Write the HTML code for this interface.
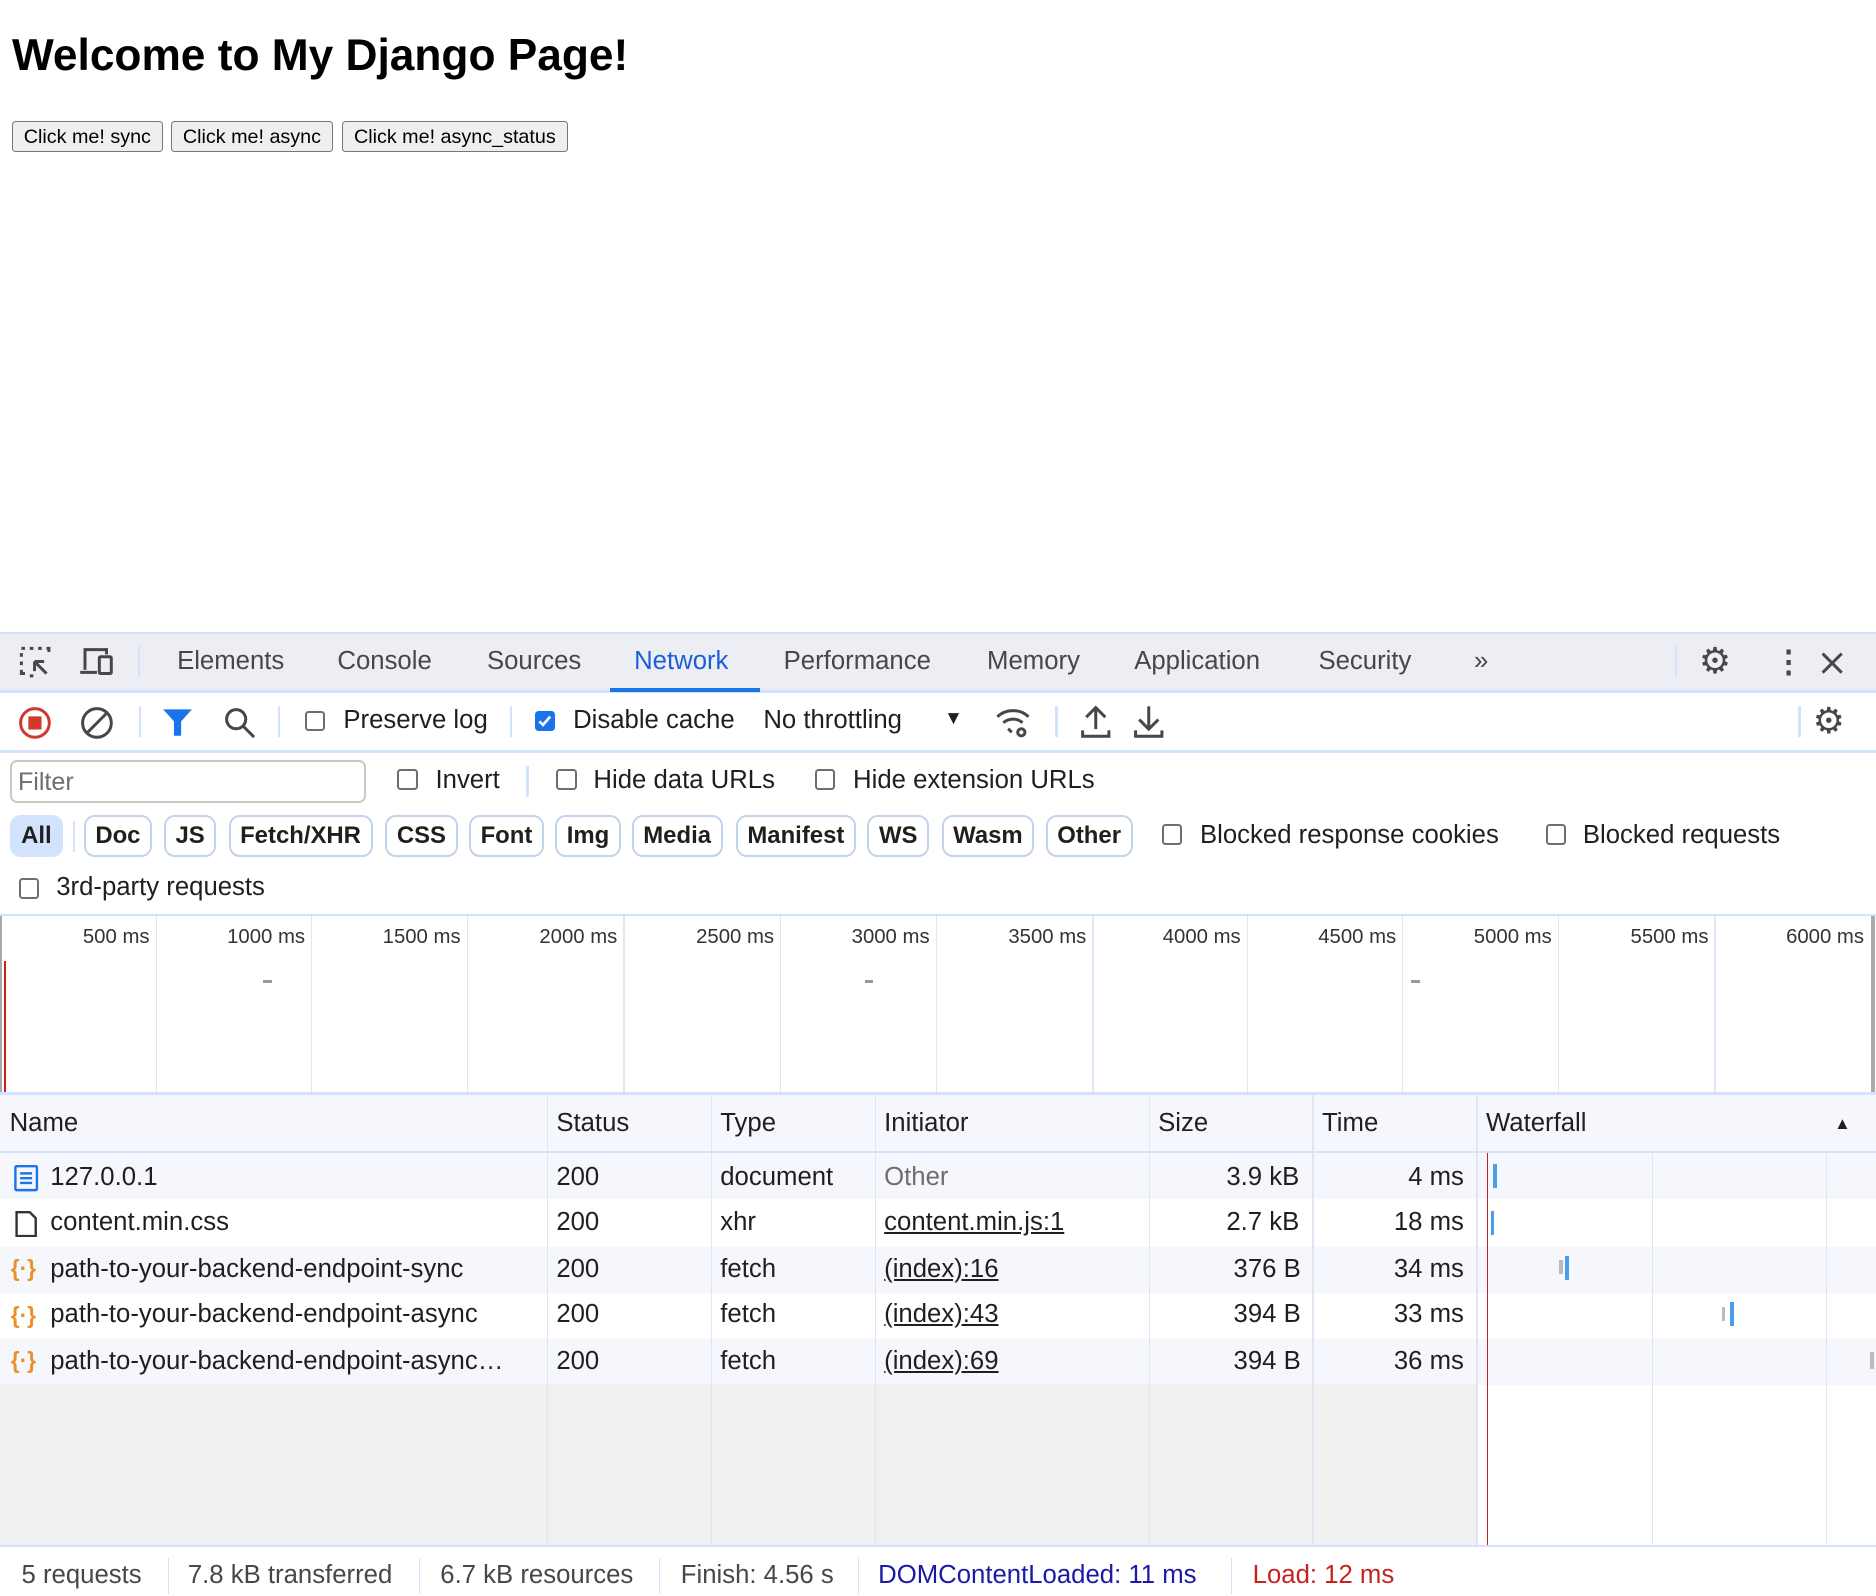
<!DOCTYPE html>
<html><head><meta charset="utf-8"><style>
html,body{margin:0;padding:0;background:#fff;overflow:hidden}
#w{zoom:1.19643;width:1568px;height:1334px;position:relative;font-family:"Liberation Sans",sans-serif;color:#1f1f1f}
.a{position:absolute;white-space:nowrap}
h1{position:absolute;left:10px;top:26px;margin:0;font-size:37px;font-weight:bold;color:#000}
.btn{position:absolute;top:101px;height:26px;border:1px solid #767676;border-radius:3px;background:#efefef;font-size:16.5px;line-height:26px;padding:0 9px;box-sizing:border-box;color:#000}
.tab{position:absolute;top:541px;font-size:21.5px;color:#474747}
.hl{position:absolute;left:0;width:1568px;height:2px;background:#d3e3fd}
.vl{position:absolute;width:2px;background:#d3e3fd}
.cb{position:absolute;width:17px;height:17px;border:2px solid #6e6e6e;border-radius:3px;box-sizing:border-box}
.t{font-size:21.5px;position:absolute;white-space:nowrap}
.chip{position:absolute;top:681px;height:35px;border:2px solid #c3d3ef;border-radius:9px;box-sizing:border-box;font-size:20px;font-weight:bold;line-height:31px;padding:0 8px;color:#1f1f1f}
.gl{position:absolute;top:766px;height:147px;width:1px;background:#dde6f6}
.ml{position:absolute;top:774px;font-size:17px;color:#333;text-align:right;width:100px}
.row{position:absolute;left:0;width:1234px;height:38.5px}
.cell{position:absolute;font-size:21.5px;white-space:nowrap;line-height:38px}
.u{text-decoration:underline}
.cl{position:absolute;top:915px;height:376px;width:1px;background:#dfe6f3}
</style></head><body><div id="w">
<h1>Welcome to My Django Page!</h1>
<div class="btn" style="left:10px">Click me! sync</div>
<div class="btn" style="left:143px">Click me! async</div>
<div class="btn" style="left:286px">Click me! async_status</div>

<!-- tab bar -->
<div class="a" style="left:0;top:529px;width:1568px;height:49px;background:#eceef4"></div>
<div class="hl" style="top:528px"></div>
<div class="hl" style="top:577px"></div>
<svg class="a" style="left:16px;top:540px" width="28" height="28" viewBox="0 0 28 28" fill="none" stroke="#474747" stroke-width="2.5"><path d="M2 2h3M9 2h3M16 2h3M23 2h2v3M2 6v3M2 13v3M2 20v3h3M9 25h3" /><path d="M13 13l10 10M13 13h8M13 13v8"/></svg>
<svg class="a" style="left:66px;top:540px" width="32" height="28" viewBox="0 0 32 28" fill="none" stroke="#474747" stroke-width="2.5"><path d="M5 20V3h18v4M1 22h14"/><rect x="17" y="9" width="10" height="14" rx="1"/></svg>
<div class="vl" style="left:115px;top:540px;height:26px"></div>
<div class="tab" style="left:148px">Elements</div>
<div class="tab" style="left:282px">Console</div>
<div class="tab" style="left:407px">Sources</div>
<div class="tab" style="left:530px;color:#1a5fd6">Network</div>
<div class="a" style="left:510px;top:575px;width:125px;height:3px;background:#1a73e8"></div>
<div class="tab" style="left:655px">Performance</div>
<div class="tab" style="left:825px">Memory</div>
<div class="tab" style="left:948px">Application</div>
<div class="tab" style="left:1102px">Security</div>
<div class="tab" style="left:1232px">&#187;</div>
<div class="vl" style="left:1400px;top:540px;height:26px"></div>
<div class="a" style="left:1420px;top:537px;font-size:30px;color:#474747;line-height:32px">&#9881;</div>
<div class="a" style="left:1482px;top:539px;font-size:26px;color:#474747;font-weight:bold;line-height:28px">&#8942;</div>
<svg class="a" style="left:1520px;top:543px" width="22" height="22" viewBox="0 0 22 22" stroke="#474747" stroke-width="2.5"><path d="M3 3l16 16M19 3L3 19"/></svg>

<!-- toolbar -->
<svg class="a" style="left:14px;top:589px" width="30" height="30" viewBox="0 0 30 30"><circle cx="15" cy="15" r="12" fill="none" stroke="#d0392e" stroke-width="2.5"/><rect x="9.5" y="9.5" width="11" height="11" fill="#d0392e"/></svg>
<svg class="a" style="left:66px;top:589px" width="30" height="30" viewBox="0 0 30 30" fill="none" stroke="#474747" stroke-width="2.5"><circle cx="15" cy="15" r="12"/><path d="M7 23L23 7"/></svg>
<div class="vl" style="left:116px;top:590px;height:26px"></div>
<svg class="a" style="left:135px;top:591px" width="26" height="26" viewBox="0 0 26 26"><path d="M1 2h24l-9 10v12h-6V12z" fill="#1a73e8"/></svg>
<svg class="a" style="left:186px;top:590px" width="28" height="28" viewBox="0 0 28 28" fill="none" stroke="#474747" stroke-width="2.5"><circle cx="11" cy="11" r="8"/><path d="M17 17l9 9"/></svg>
<div class="vl" style="left:232px;top:590px;height:26px"></div>
<div class="cb" style="left:255px;top:594px"></div>
<div class="t" style="left:287px;top:590px">Preserve log</div>
<div class="vl" style="left:426px;top:590px;height:26px"></div>
<div class="cb" style="left:447px;top:594px;background:#1a73e8;border-color:#1a73e8"></div>
<svg class="a" style="left:449px;top:596px" width="13" height="13" viewBox="0 0 13 13" fill="none" stroke="#fff" stroke-width="2.2"><path d="M2 7l3 3 6-7"/></svg>
<div class="t" style="left:479px;top:590px">Disable cache</div>
<div class="t" style="left:638px;top:590px">No throttling</div>
<div class="a" style="left:789px;top:592px;font-size:16px;color:#1f1f1f">&#9660;</div>
<svg class="a" style="left:832px;top:590px" width="32" height="28" viewBox="0 0 32 28" fill="none" stroke="#474747" stroke-width="2.5"><path d="M2 9a19 19 0 0 1 26 0M7 14a12 12 0 0 1 16 0M11 19l3 3"/><circle cx="22" cy="22" r="3"/></svg>
<div class="vl" style="left:882px;top:590px;height:26px"></div>
<svg class="a" style="left:902px;top:588px" width="28" height="30" viewBox="0 0 28 30" fill="none" stroke="#474747" stroke-width="2.5"><path d="M14 21V3M6 11l8-8 8 8M3 22v5h22v-5"/></svg>
<svg class="a" style="left:946px;top:588px" width="28" height="30" viewBox="0 0 28 30" fill="none" stroke="#474747" stroke-width="2.5"><path d="M14 2v19M6 13l8 8 8-8M3 22v5h22v-5"/></svg>
<div class="vl" style="left:1503px;top:590px;height:26px"></div>
<div class="a" style="left:1515px;top:587px;font-size:30px;color:#474747;line-height:32px">&#9881;</div>
<div class="hl" style="top:627px"></div>

<!-- filter row -->
<div class="a" style="left:8px;top:635px;width:298px;height:36px;border:2px solid #c9c9c9;border-radius:6px;box-sizing:border-box"></div>
<div class="t" style="left:15px;top:642px;color:#6e6e6e;font-size:21px">Filter</div>
<div class="cb" style="left:332px;top:643px"></div>
<div class="t" style="left:364px;top:640px">Invert</div>
<div class="vl" style="left:440px;top:640px;height:26px"></div>
<div class="cb" style="left:465px;top:643px"></div>
<div class="t" style="left:496px;top:640px">Hide data URLs</div>
<div class="cb" style="left:681px;top:643px"></div>
<div class="t" style="left:713px;top:640px">Hide extension URLs</div>

<div class="chip" style="left:8px;background:#d3e3fd;border-color:#d3e3fd">All</div>
<div class="vl" style="left:61px;top:686px;height:26px"></div>
<div class="chip" style="left:70px">Doc</div>
<div class="chip" style="left:137px">JS</div>
<div class="chip" style="left:191px">Fetch/XHR</div>
<div class="chip" style="left:322px">CSS</div>
<div class="chip" style="left:392px">Font</div>
<div class="chip" style="left:464px">Img</div>
<div class="chip" style="left:528px">Media</div>
<div class="chip" style="left:615px">Manifest</div>
<div class="chip" style="left:725px">WS</div>
<div class="chip" style="left:787px">Wasm</div>
<div class="chip" style="left:874px">Other</div>
<div class="cb" style="left:971px;top:689px"></div>
<div class="t" style="left:1003px;top:686px">Blocked response cookies</div>
<div class="cb" style="left:1292px;top:689px"></div>
<div class="t" style="left:1323px;top:686px">Blocked requests</div>
<div class="cb" style="left:16px;top:734px"></div>
<div class="t" style="left:47px;top:730px">3rd-party requests</div>
<div class="hl" style="top:764px"></div>

<!-- overview -->
<div class="a" style="left:0;top:766px;width:2px;height:147px;background:#aaa"></div>
<div class="a" style="left:1564px;top:766px;width:3px;height:147px;background:#aaa"></div>
<div class="a" style="left:3px;top:803px;width:2px;height:110px;background:#c5221f"></div>
<div class="gl" style="left:130px"></div><div class="gl" style="left:260px"></div><div class="gl" style="left:390px"></div><div class="gl" style="left:521px"></div><div class="gl" style="left:652px"></div><div class="gl" style="left:782px"></div><div class="gl" style="left:913px"></div><div class="gl" style="left:1042px"></div><div class="gl" style="left:1172px"></div><div class="gl" style="left:1302px"></div><div class="gl" style="left:1433px"></div>
<div class="ml" style="left:25px">500 ms</div><div class="ml" style="left:155px">1000 ms</div><div class="ml" style="left:285px">1500 ms</div><div class="ml" style="left:416px">2000 ms</div><div class="ml" style="left:547px">2500 ms</div><div class="ml" style="left:677px">3000 ms</div><div class="ml" style="left:808px">3500 ms</div><div class="ml" style="left:937px">4000 ms</div><div class="ml" style="left:1067px">4500 ms</div><div class="ml" style="left:1197px">5000 ms</div><div class="ml" style="left:1328px">5500 ms</div><div class="ml" style="left:1458px">6000 ms</div>
<div class="a" style="left:220px;top:819px;width:7px;height:3px;background:#999"></div>
<div class="a" style="left:723px;top:819px;width:7px;height:3px;background:#999"></div>
<div class="a" style="left:1179px;top:819px;width:8px;height:3px;background:#999"></div>
<div class="hl" style="top:913px"></div>

<!-- table -->
<div class="a" style="left:0;top:915px;width:1568px;height:48px;background:#f5f7fc"></div>
<div class="hl" style="top:962px"></div>
<div class="row" style="top:964px;background:#f5f7fc;width:1568px"></div>
<div class="row" style="top:1042px;background:#f5f7fc;width:1568px"></div>
<div class="row" style="top:1119px;background:#f5f7fc;width:1568px"></div>
<div class="a" style="left:0;top:1157px;width:1234px;height:134px;background:#f1f1f1"></div>
<div class="cl" style="left:457px"></div><div class="cl" style="left:594px"></div><div class="cl" style="left:731px"></div><div class="cl" style="left:960px"></div><div class="cl" style="left:1097px"></div><div class="cl" style="left:1234px"></div>
<div class="a" style="left:1381px;top:964px;width:1px;height:327px;background:#dfe6f3"></div>
<div class="a" style="left:1526px;top:964px;width:1px;height:327px;background:#dfe6f3"></div>
<div class="a" style="left:1243px;top:964px;width:1px;height:327px;background:#c5221f"></div>
<div class="cell" style="left:8px;top:920px">Name</div><div class="cell" style="left:465px;top:920px">Status</div><div class="cell" style="left:602px;top:920px">Type</div><div class="cell" style="left:739px;top:920px">Initiator</div><div class="cell" style="left:968px;top:920px">Size</div><div class="cell" style="left:1105px;top:920px">Time</div><div class="cell" style="left:1242px;top:920px">Waterfall</div>
<div class="a" style="left:1533px;top:931px;font-size:14px">&#9650;</div>

<!-- rows -->
<svg class="a" style="left:11px;top:974px" width="22" height="22" viewBox="0 0 22 22" fill="none" stroke="#1a73e8" stroke-width="2"><rect x="2" y="1" width="18" height="20" rx="1"/><path d="M6 7h10M6 11h10M6 15h10"/></svg>
<svg class="a" style="left:11px;top:1012px" width="22" height="22" viewBox="0 0 22 22" fill="none" stroke="#333" stroke-width="2"><path d="M3 1h11l5 5v15H3z"/></svg>
<div class="a" style="left:9px;top:1049px;font-size:19px;color:#e8912a;font-weight:bold">{·}</div>
<div class="a" style="left:9px;top:1088px;font-size:19px;color:#e8912a;font-weight:bold">{·}</div>
<div class="a" style="left:9px;top:1126px;font-size:19px;color:#e8912a;font-weight:bold">{·}</div>

<div class="cell" style="left:42px;top:965px">127.0.0.1</div><div class="cell" style="left:465px;top:965px">200</div><div class="cell" style="left:602px;top:965px">document</div><div class="cell" style="left:739px;top:965px;color:#6e6e6e">Other</div><div class="cell" style="left:1025px;top:965px">3.9 kB</div><div class="cell" style="left:1177px;top:965px">4 ms</div>
<div class="cell" style="left:42px;top:1003px">content.min.css</div><div class="cell" style="left:465px;top:1003px">200</div><div class="cell" style="left:602px;top:1003px">xhr</div><div class="cell u" style="left:739px;top:1003px">content.min.js:1</div><div class="cell" style="left:1025px;top:1003px">2.7 kB</div><div class="cell" style="left:1165px;top:1003px">18 ms</div>
<div class="cell" style="left:42px;top:1042px">path-to-your-backend-endpoint-sync</div><div class="cell" style="left:465px;top:1042px">200</div><div class="cell" style="left:602px;top:1042px">fetch</div><div class="cell u" style="left:739px;top:1042px">(index):16</div><div class="cell" style="left:1031px;top:1042px">376 B</div><div class="cell" style="left:1165px;top:1042px">34 ms</div>
<div class="cell" style="left:42px;top:1080px">path-to-your-backend-endpoint-async</div><div class="cell" style="left:465px;top:1080px">200</div><div class="cell" style="left:602px;top:1080px">fetch</div><div class="cell u" style="left:739px;top:1080px">(index):43</div><div class="cell" style="left:1031px;top:1080px">394 B</div><div class="cell" style="left:1165px;top:1080px">33 ms</div>
<div class="cell" style="left:42px;top:1119px">path-to-your-backend-endpoint-async…</div><div class="cell" style="left:465px;top:1119px">200</div><div class="cell" style="left:602px;top:1119px">fetch</div><div class="cell u" style="left:739px;top:1119px">(index):69</div><div class="cell" style="left:1031px;top:1119px">394 B</div><div class="cell" style="left:1165px;top:1119px">36 ms</div>
<div class="a" style="left:1248px;top:973px;width:3px;height:20px;background:#4a9de8"></div>
<div class="a" style="left:1246px;top:1012px;width:3px;height:20px;background:#4a9de8"></div>
<div class="a" style="left:1303px;top:1053px;width:3px;height:12px;background:#bbb"></div>
<div class="a" style="left:1308px;top:1050px;width:3px;height:20px;background:#4a9de8"></div>
<div class="a" style="left:1439px;top:1092px;width:3px;height:12px;background:#bbb"></div>
<div class="a" style="left:1446px;top:1088px;width:3px;height:20px;background:#4a9de8"></div>
<div class="a" style="left:1563px;top:1130px;width:3px;height:14px;background:#bbb"></div>

<!-- status bar -->
<div class="hl" style="top:1291px"></div>
<div class="t" style="left:18px;top:1305px;color:#474747">5 requests</div>
<div class="vl" style="left:140px;top:1302px;height:30px;width:1px"></div>
<div class="t" style="left:157px;top:1305px;color:#474747">7.8 kB transferred</div>
<div class="vl" style="left:350px;top:1302px;height:30px;width:1px"></div>
<div class="t" style="left:368px;top:1305px;color:#474747">6.7 kB resources</div>
<div class="vl" style="left:551px;top:1302px;height:30px;width:1px"></div>
<div class="t" style="left:569px;top:1305px;color:#474747">Finish: 4.56 s</div>
<div class="vl" style="left:717px;top:1302px;height:30px;width:1px"></div>
<div class="t" style="left:734px;top:1305px;color:#1a1aa6">DOMContentLoaded: 11 ms</div>
<div class="vl" style="left:1029px;top:1302px;height:30px;width:1px"></div>
<div class="t" style="left:1047px;top:1305px;color:#c5221f">Load: 12 ms</div>
</div></body></html>
